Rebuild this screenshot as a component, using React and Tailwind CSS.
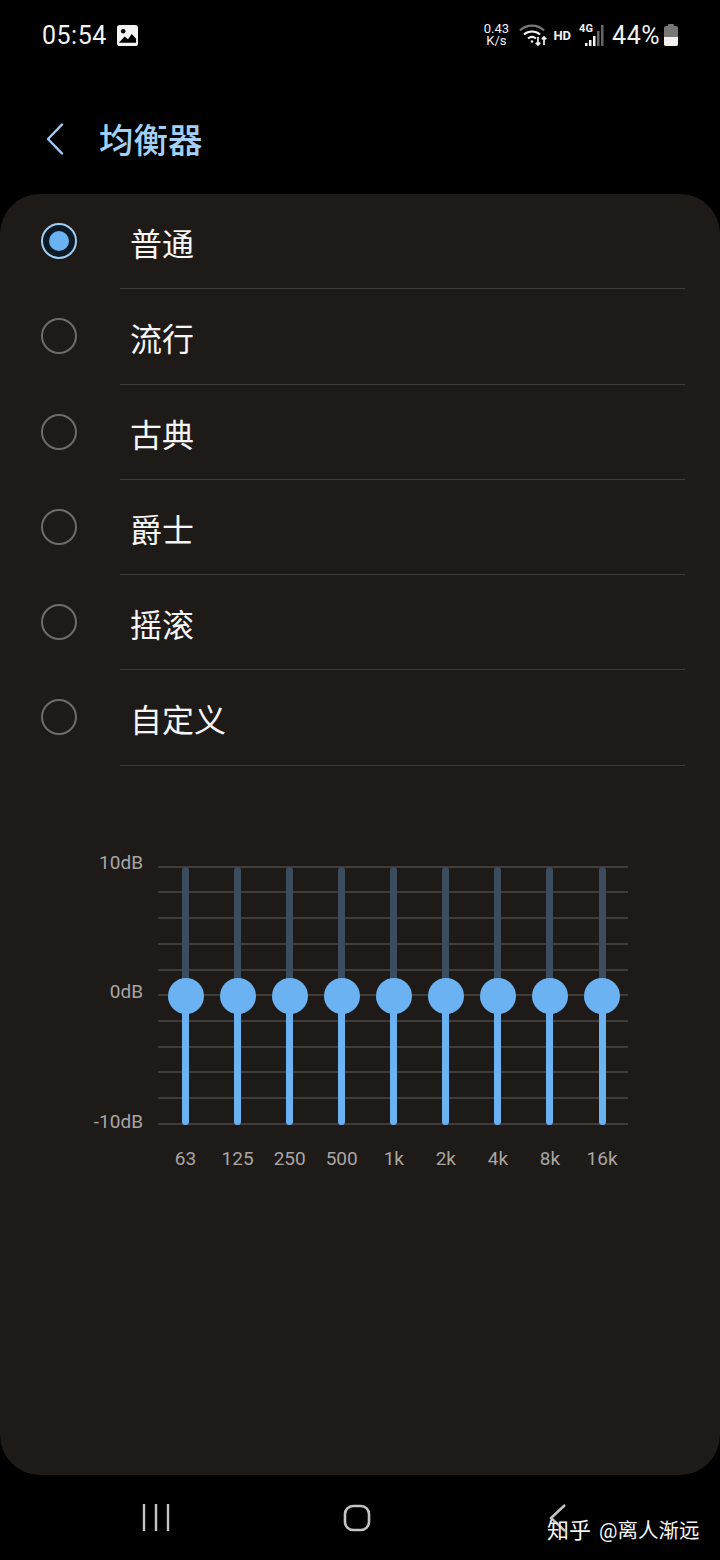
const presets = ['普通', '流行', '古典', '爵士', '摇滚', '自定义']
const bands = ['63', '125', '250', '500', '1k', '2k', '4k', '8k', '16k']
const gridLines = [0, 1, 2, 3, 4, 5, 6, 7, 8, 9, 10]

function StatusBar() {
  return (
    <div className="flex h-[70px] items-center justify-between pl-[42px] pr-[42px] text-[#f2f2f2]">
      <div className="flex items-center gap-[10px]">
        <span className="text-[25px] leading-none tracking-[0.5px]">05:54</span>
        <svg width="21" height="21" viewBox="0 0 22 22">
          <rect width="22" height="22" rx="3" fill="#f4f4f4" />
          <circle cx="6.5" cy="6.5" r="2.4" fill="#000" />
          <path d="M2 18.5 L8 12 L11.5 15 L15.5 9.5 L20 14.5 V18.5 Z" fill="#000" />
        </svg>
      </div>
      <div className="flex items-center">
        <div className="flex w-[28px] flex-col items-center text-[13px] leading-[12px]">
          <span>0.43</span>
          <span>K/s</span>
        </div>
        <svg className="ml-[9px]" width="29" height="24" viewBox="0 0 29 24" fill="none" stroke="#f2f2f2" strokeWidth="2.2">
          <path d="M1 7.5 C7 1 19 1 25 7.5" stroke="#777" />
          <path d="M5 11.5 C9.5 7.5 16.5 7.5 21 11.5" />
          <path d="M9 15.5 C11.5 13.5 14.5 13.5 17 15.5" />
          <circle cx="13" cy="18.5" r="1.2" fill="#f2f2f2" stroke="none" />
          <path d="M19 14 V22 M16.8 19.6 L19 22 L21.2 19.6" strokeWidth="1.7" />
          <path d="M25 22 V14 M22.8 16.4 L25 14 L27.2 16.4" strokeWidth="1.7" />
        </svg>
        <span className="ml-[5px] text-[13px] font-bold leading-none">HD</span>
        <div className="relative ml-[8px] h-[24px] w-[26px]">
          <span className="absolute left-0 top-0 text-[11px] font-bold leading-none">4G</span>
          <svg className="absolute left-0 top-0" width="26" height="24" viewBox="0 0 26 24" fill="#f2f2f2">
            <rect x="6" y="20" width="2.5" height="3" />
            <rect x="10" y="17" width="2.5" height="6" />
            <rect x="14" y="13" width="2.5" height="10" />
            <rect x="18" y="8" width="2.5" height="15" fill="#666" />
            <rect x="22" y="2" width="2.5" height="21" fill="#666" />
          </svg>
        </div>
        <span className="ml-[7px] text-[25px] leading-none tracking-[0.5px]">44%</span>
        <svg className="ml-[4px]" width="14" height="22" viewBox="0 0 14 22">
          <rect x="4" y="0" width="6" height="3" rx="1" fill="#777" />
          <rect x="0" y="2" width="14" height="20" rx="2" fill="#777" />
          <path d="M0 13 H14 V20 A2 2 0 0 1 12 22 H2 A2 2 0 0 1 0 20 Z" fill="#f2f2f2" />
        </svg>
      </div>
    </div>
  )
}

function Header() {
  return (
    <div className="flex h-[124px] items-start pl-[46px] pt-[53px]">
      <svg width="18" height="32" viewBox="0 0 18 32" fill="none" stroke="#9fcdf7" strokeWidth="2.4" strokeLinecap="round" strokeLinejoin="round">
        <path d="M16 1.5 L2 16 L16 30.5" />
      </svg>
      <h1 className="ml-[35px] text-[34.5px] font-medium leading-[36px] text-[#a3d0f8]">均衡器</h1>
    </div>
  )
}

function Radio({ checked }) {
  if (checked) {
    return (
      <div className="flex h-[36px] w-[36px] items-center justify-center rounded-full border-2 border-[#9fcdf0] bg-[#0d1a26]">
        <div className="h-[20px] w-[20px] rounded-full bg-[#6ab2f2]" />
      </div>
    )
  }
  return <div className="h-[36px] w-[36px] rounded-full border-2 border-[#6e6c6a]" />
}

function PresetRow({ label, checked }) {
  return (
    <div className="flex h-[95.3px]">
      <div className="w-[120px] pl-[41px] pt-[29px]">
        <Radio checked={checked} />
      </div>
      <div className="mr-[35px] flex-1 border-b border-[#3e3c3a] pl-[10px] pt-[32px]">
        <span className="text-[32px] leading-[38px] text-[#f5f5f5]">{label}</span>
      </div>
    </div>
  )
}

function Equalizer() {
  return (
    <div className="mt-[100px] flex pl-[92px]">
      <div className="flex h-[259px] w-[51px] flex-col text-right text-[19px] leading-[20px] text-[#a8a6a4]">
        <span className="-mt-[13px]">10dB</span>
        <span className="mt-[109px]">0dB</span>
        <span className="mt-[110px]">-10dB</span>
      </div>
      <div className="ml-[15px] w-[470px]">
        <div className="relative h-[259px]">
          <div className="flex h-full flex-col justify-between">
            {gridLines.map((line) => (
              <div key={line} className="h-[2px] bg-[#3f3d3b]" />
            ))}
          </div>
          <div className="absolute inset-0 flex pl-[1.5px]">
            {bands.map((band) => (
              <div key={band} className="relative flex w-[52.1px] justify-center">
                <div className="mt-[1px] h-[130px] w-[7px] rounded-t-full bg-[#3a4c5e]" />
                <div className="absolute bottom-0 left-[22.5px] top-[130px] w-[7px] rounded-b-full bg-[#6ab2f2]" />
                <div className="absolute left-[8px] top-[112px] h-[36px] w-[36px] rounded-full bg-[#6ab2f2]" />
              </div>
            ))}
          </div>
        </div>
        <div className="mt-[23px] flex pl-[1.5px]">
          {bands.map((band) => (
            <span key={band} className="w-[52.1px] text-center text-[19px] leading-[22px] text-[#a8a6a4]">
              {band}
            </span>
          ))}
        </div>
      </div>
    </div>
  )
}

function NavBar() {
  return (
    <div className="relative flex h-[85px] items-start justify-between pl-[142px] pr-[152px] pt-[29px]">
      <svg width="28" height="27" viewBox="0 0 28 27" stroke="#c4c4c4" strokeWidth="2.4">
        <path d="M2 0 V27 M14 0 V27 M26 0 V27" />
      </svg>
      <svg className="mr-[4px]" width="28" height="28" viewBox="0 0 28 28" fill="none" stroke="#c4c4c4" strokeWidth="2.6">
        <rect x="2" y="2" width="24" height="24" rx="8" />
      </svg>
      <svg width="20" height="28" viewBox="0 0 20 28" fill="none" stroke="#c4c4c4" strokeWidth="2.4">
        <path d="M17 1 L3 14 L17 27" />
      </svg>
      <div className="absolute left-[547px] top-[42px] flex items-center text-[#f4f4f4]">
        <span className="text-[22px] leading-[28px]">知乎</span>
        <span className="ml-[8px] text-[20.5px] leading-[28px]">@离人渐远</span>
      </div>
    </div>
  )
}

export default function App() {
  return (
    <div
      className="h-[1560px] w-[720px] overflow-hidden bg-black"
      style={{ fontFamily: 'Roboto, "Noto Sans CJK SC", sans-serif' }}
    >
      <StatusBar />
      <Header />
      <div className="h-[1281px] rounded-[40px] bg-[#1e1a18]">
        <div>
          {presets.map((label, i) => (
            <PresetRow key={label} label={label} checked={i === 0} />
          ))}
        </div>
        <Equalizer />
      </div>
      <NavBar />
    </div>
  )
}
